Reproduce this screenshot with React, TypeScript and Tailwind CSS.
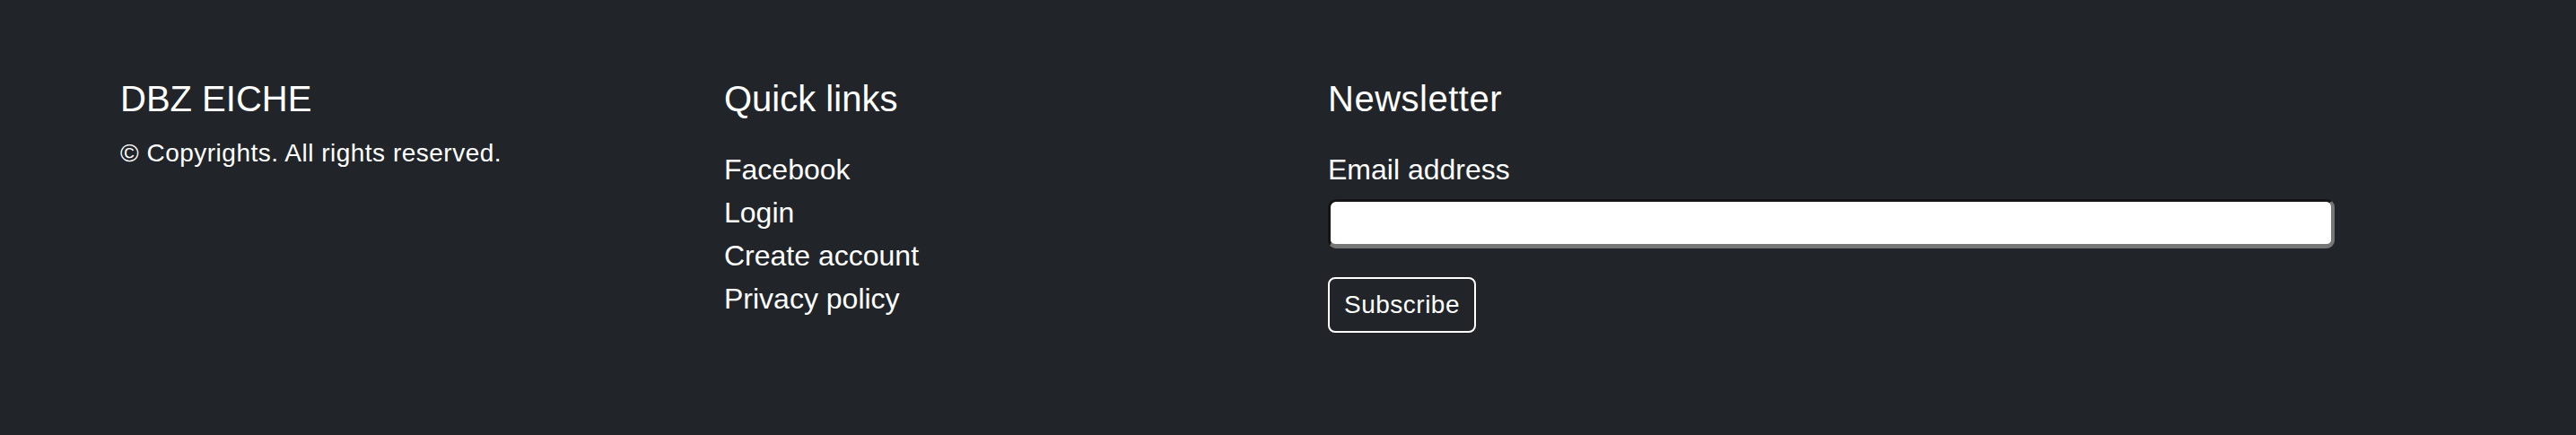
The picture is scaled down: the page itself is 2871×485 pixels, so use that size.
import React from 'react';

const links = ['Facebook', 'Login', 'Create account', 'Privacy policy'];

// The page was captured at 2x, so every size here is doubled.
const App: React.FC = () => {
  return (
    <footer
      className="w-full min-h-[485px] bg-[#212529] text-white pt-[86px] pl-[134px]"
      style={{ fontFamily: '"Liberation Sans", Arial, sans-serif' }}
    >
      <div className="flex">
        {/* Brand */}
        <div className="w-[673px]">
          <h5 className="text-[40px] leading-[48px] mb-[16px]">DBZ EICHE</h5>
          <p className="text-[28px] leading-[42px] tracking-[0.5px]">© Copyrights. All rights reserved.</p>
        </div>

        {/* Quick links */}
        <div className="w-[673px]">
          <h5 className="text-[40px] leading-[48px] mb-[31px]">Quick links</h5>
          <ul className="flex flex-col">
            {links.map((link) => (
              <li key={link} className="text-[32px] leading-[48px]">
                <a href="#" className="text-white">{link}</a>
              </li>
            ))}
          </ul>
        </div>

        {/* Newsletter */}
        <div className="w-[1122px]">
          <h5 className="text-[40px] leading-[48px] mb-[31px] tracking-[0.5px]">Newsletter</h5>
          <form className="flex flex-col items-start">
            <label htmlFor="email" className="text-[32px] leading-[48px] mb-[9px]">
              Email address
            </label>
            <input
              id="email"
              type="email"
              className="w-[1122px] h-[55px] bg-white rounded-[9px] border-solid border-t-[3px] border-l-[3px] border-b-[5px] border-r-[4px] border-t-[#151515] border-l-[#151515] border-b-[#767676] border-r-[#767676] outline-none"
            />
            <button
              type="button"
              className="mt-[32px] px-[16px] py-[8px] border-2 border-white rounded-[8px] text-[28px] leading-[42px] tracking-[0.5px] text-white"
            >
              Subscribe
            </button>
          </form>
        </div>
      </div>
    </footer>
  );
};

export default App;
